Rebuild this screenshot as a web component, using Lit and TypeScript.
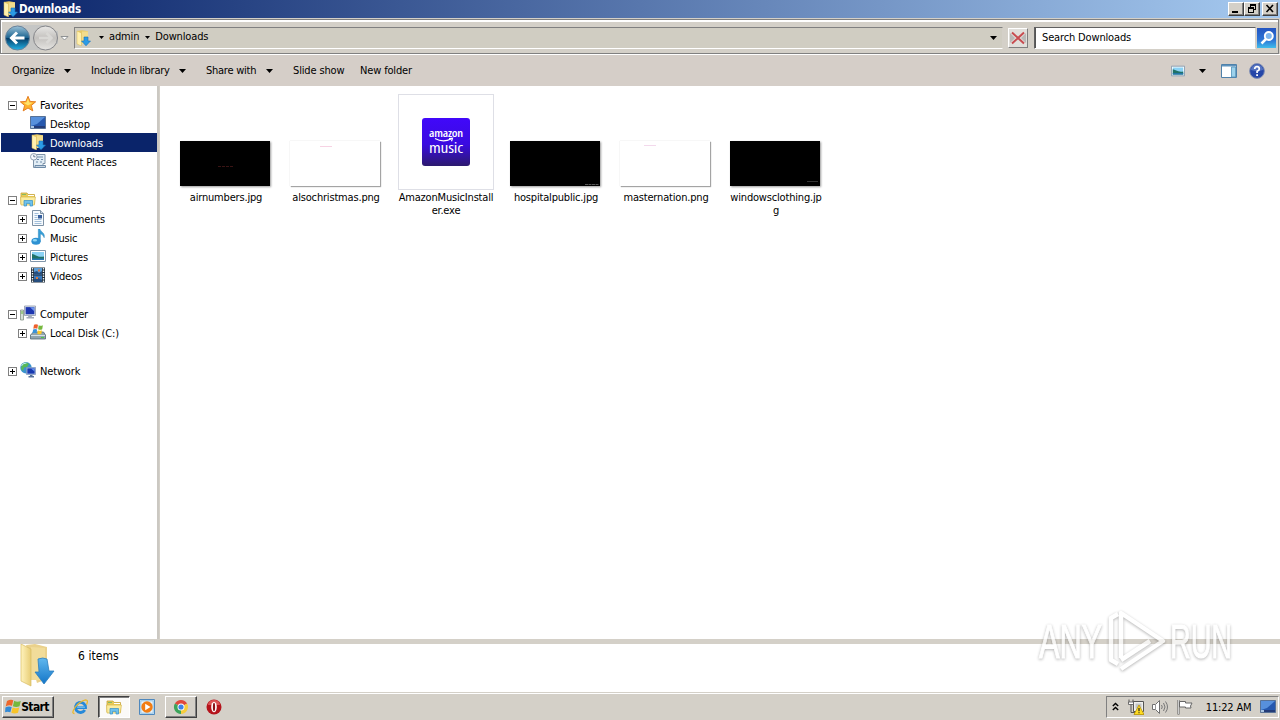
import {LitElement, html, svg, css, nothing} from 'lit';
import type {SVGTemplateResult} from 'lit';
import {customElement, property} from 'lit/decorators.js';
import {classMap} from 'lit/directives/class-map.js';

// 16x16 glyphs, keyed by name
const icons: Record<string, SVGTemplateResult> = {
  download: svg`
    <path d="M2 1l5-.8 6 1V14H7z" fill="#e9c965"/>
    <path d="M7 1.5h6V14H7z" fill="#f3dc8c"/>
    <path d="M2 1l4.500 2v13L2 14z" fill="#fff0ae" stroke="#d9b854" stroke-width=".5"/>
    <path d="M9 7h4v4h2.500L11 15.800 6.500 11H9z" fill="#2b9be6" stroke="#1874bb" stroke-width=".6"/>`,
  star: svg`
    <path d="M8 .3l2.100 5.100 5.600.4-4.300 3.600 1.400 5.500L8 12l-4.800 2.900 1.400-5.500L.3 5.800l5.600-.4z" fill="#fdb12c" stroke="#e2761b" stroke-width=".9"/>
    <path d="M8 2.500l1.300 4 3.500.3L8 9.500 3.500 6.800l3-.3z" fill="#ffe36b"/>`,
  desktop: svg`
    <path d="M.5 1.500h15v12H.5z" fill="#2658ae" stroke="#587296"/>
    <path d="M1 2h14L7 9 1 11z" fill="#5790dc"/>
    <path d="M1 11h14v2H1z" fill="#243c78"/><path d="M1 11h3v2H1z" fill="#a8c4e4"/>`,
  recent: svg`
    <path d="M5 1.500h10v9H13v4H3.500v-9z" fill="#e2edf5" stroke="#7e93a8"/>
    <path d="M7 4h6M7 6.500h2M11 6.500h2M6 9h2M10 9h2M5 12.500h10.500v2H5z" stroke="#6e8ba8" fill="#c7d5e2"/>
    <circle cx="3.800" cy="3.800" r="3.300" fill="#f7fbff" stroke="#91a1b2"/><path d="M3.800 1.800v2h1.700" fill="none" stroke="#4b6078" stroke-width=".8"/>`,
  library: svg`
    <path d="M1 2h6l1 1.500h6.500V13H1z" fill="#eacb57" stroke="#c6a53c" stroke-width=".8"/>
    <path d="M2 3.500h4" stroke="#85bb62"/><path d="M8 4.500h6" stroke="#fff"/>
    <path d="M.6 6h14.800l-1 8H1z" fill="#fbeca0" stroke="#d7b84c" stroke-width=".7"/>
    <path d="M4 15V9.500h8.500V15H10v-2.600H6.500V15z" fill="#6fc1ec" stroke="#348fc6" stroke-width=".7"/>`,
  document: svg`
    <path d="M2.500.5h8l3 3v12h-11z" fill="#f6fafd" stroke="#7d91a5"/>
    <path d="M10.500.5v3h3" fill="#cdd9e5" stroke="#7d91a5"/>
    <path d="M4.500 3.500h4M4.500 5.500h3M4.500 7.500h3M4.500 9.500h7M4.500 11.500h7M4.500 13.500h7" stroke="#8caed0" stroke-width=".8"/><path d="M8 5h4v3.500H8z" fill="#365f9d"/>`,
  music: svg`
    <path d="M8.300 0h1.600c.6 3 5.600 3.800 4.300 8.800C13 6 11.500 5 10.400 5v7.500H8.300z" fill="#389ed6" stroke="#2682b8" stroke-width=".4"/>
    <ellipse cx="6" cy="12.200" rx="4.600" ry="3.500" fill="#2d91d2"/><ellipse cx="4.900" cy="11.200" rx="2.200" ry="1.200" fill="#8ed6f5"/>`,
  picture: svg`
    <path d="M.5 2.500h15v11H.5z" fill="#fff" stroke="#8196aa"/>
    <path d="M2 4h12v8H2z" fill="#8bd2f5"/><path d="M2 6c3 0 6 4 12 2.500V12H2z" fill="#207267"/>
    <path d="M2 10.500h12V12H2z" fill="#2677b5"/>`,
  video: svg`
    <path d="M1 .5h14v15H1z" fill="#1f2c38"/><path d="M4 1h8v6.500H4z" fill="#5b9ed9"/><path d="M4 8.500h8V15H4z" fill="#3979bd"/>
    <path d="M4 5l3-1 2 2 3-2v3.500H4zM4 12l4-1 4 2v2H4z" fill="#264e7e"/><path d="M8 2.500h2v2H8zM6 10h2v2H6z" fill="#d8793e"/>
    <path d="M2.500 1v14M13.500 1v14" stroke="#e9f1f6" stroke-width="1.400" stroke-dasharray="1.500 1"/>`,
  computer: svg`
    <path d="M.5 5h3v10h-3z" fill="#d5dfd7" stroke="#849286" stroke-width=".8"/><path d="M2 6v3" stroke="#62b13e"/>
    <path d="M4.500 1h11v9.500h-11z" fill="#dce3ed" stroke="#8d98aa" stroke-width=".8"/><path d="M5.600 2.100h8.800v7.200H5.600z" fill="#1d36b0"/>
    <path d="M10 2.200h4.200v4z" fill="#6d95ed"/><path d="M8.500 10.500h3l.5 1.500h2v1.500H6.500V12H8z" fill="#a2aaba"/>`,
  disk: svg`
    <path d="M.5 11l3-3h10l2 3v4H.5z" fill="#91a4ae" stroke="#526875" stroke-width=".8"/>
    <path d="M1 11.500h14" stroke="#d4e1e7"/><path d="M11 13.500h3" stroke="#4cca44"/>
    <path d="M4 .8q2-1.200 4 0l-.7 4q-2-1-4 0z" fill="#ee602d"/><path d="M8.700 1.300q2 1 4.200 0l-.7 4q-2 1-4.100 0z" fill="#76b83e"/>
    <path d="M3.100 5.500q2-1 4 0l-.6 3.700q-2-1-4.100 0z" fill="#3793da"/><path d="M7.900 6.200q2 1 4.100 0l-.6 3.600q-2 1-4.100 0z" fill="#fac727"/>`,
  network: svg`
    <circle cx="6" cy="5.800" r="5.700" fill="#3b93cf"/><path d="M2 2q4-3 7 0L7 5 4 5.500 3 9 1 7zM8 6l3 1-3 4z" fill="#58b957"/>
    <path d="M1.500 4q1-3 5-3" stroke="#c2edff" fill="none"/>
    <path d="M6.500 5.500h9v7h-9z" fill="#c9d7ef" stroke="#738bb4" stroke-width=".7"/><path d="M7.300 6.300h7.400v5.400H7.300z" fill="#1739b0"/>
    <path d="M11 6.500h3.500v3z" fill="#6594ef"/><path d="M10 13h2.500v1H14v1.500H8.500V14H10z" fill="#56729b"/>`,
  pane: svg`
    <path d="M.5 1.500h15v13H.5z" fill="#fff" stroke="#4f81aa"/><path d="M1 2h14v1.500H1z" fill="#5e93bd"/>
    <path d="M10.500 4h4v10h-4z" fill="#9dd2ec" stroke="#4f91b9" stroke-width=".8"/>`,
  help: svg`
    <circle cx="8" cy="8" r="7.400" fill="#2546a8" stroke="#8290b4"/><path d="M2 7a6 5.500 0 0 1 12 0q-6 2-12 0z" fill="#5573c0"/>
    <path d="M5.700 6Q5.700 3.700 8 3.700T10.300 6Q10.300 7.200 8.100 8.300V10" fill="none" stroke="#fff" stroke-width="1.700"/><path d="M7.200 11.200h1.800v1.700H7.200z" fill="#fff"/>`,
  flag: svg`
    <path d="M2 2q3.500-2.200 6.300-.8L7 6.700q-3-1.200-6.300.7z" fill="#ee672c"/><path d="M9.200 1.800q3 1.600 6.600.2l-1.300 5.300q-3.600 1.500-6.600-.1z" fill="#75b83d"/>
    <path d="M.4 8.500Q3.500 6.800 6.700 8l-1.300 5.300q-3-1.200-5.300 0z" fill="#338ad6"/><path d="M7.600 8.500q3 1.500 6.600.1L13 13.800q-3.600 1.500-6.700-.1z" fill="#f8c429"/>`,
  ie: svg`
    <path d="M12.800 11A5 5 0 1 1 13.500 8.600H5" fill="none" stroke="#2689d9" stroke-width="2.900"/>
    <path d="M5 8.200h8" stroke="#84cdf6"/><path d="M2.500 14.500Q-1 14.500 3 8.500T13.500.8q3.300 0 1 4.800" fill="none" stroke="#e9b82e" stroke-width="1.300"/>`,
  player: svg`
    <path d="M.5.500h15v15H.5z" fill="#b7dbf4" stroke="#4f88bd"/><path d="M2 2h12v12H2z" fill="#e9f4fb" stroke="#80b0d5" stroke-width=".5"/>
    <circle cx="8" cy="8" r="5.700" fill="#f27d13"/><path d="M6.200 4.800L11.500 8l-5.300 3.200z" fill="#fff"/>`,
  chrome: svg`
    <path d="M8 8L1.900 4.500A7 7 0 0 1 14.100 4.600z" fill="#df483c"/><path d="M8 8l6.100-3.400A7 7 0 0 1 8 15z" fill="#f6cd3d"/>
    <path d="M8 8v7A7 7 0 0 1 1.900 4.500z" fill="#3ca45a"/><circle cx="8" cy="8" r="3.500" fill="#fff"/><circle cx="8" cy="8" r="2.600" fill="#3d82e8"/>`,
  opera: svg`
    <circle cx="8" cy="8" r="7.500" fill="#b5141c"/><path d="M2 6a6 5 0 0 1 12 0z" fill="#dd5355"/>
    <ellipse cx="8" cy="8" rx="2.800" ry="5.300" fill="#fff"/><ellipse cx="8" cy="8" rx="1.100" ry="4.300" fill="#8c1017"/>`,
  plug: svg`
    <path d="M5.500 2.500h10v10h-10z" fill="#f0f0ed" stroke="#555"/><path d="M7.500 4.500h6v5h-6z" fill="#c2c5c7"/>
    <path d="M1 .5v3.500h4V.5M3 4v9.500h4" stroke="#555" fill="none"/><path d="M.5 3h5v2.500h-5z" fill="#fff" stroke="#555" stroke-width=".8"/>
    <path d="M11 6l5 9.500H6z" fill="#ffdc22" stroke="#b59000" stroke-width=".8"/><path d="M11 9v3.300M11 13.300v1" stroke="#222" stroke-width="1.200"/>`,
  speaker: svg`
    <path d="M.5 5.500h3L7.500 1.500v13l-4-4h-3z" fill="#fff" stroke="#707070"/><path d="M3.500 5.500v5" stroke="#999"/>
    <path d="M9.500 6q1.500 2 0 4M11.500 4q3 4 0 8M13.500 2.500q4 5.500 0 11" fill="none" stroke="#777"/>`,
  action: svg`
    <path d="M1.500 1v14.500" stroke="#5b5b5b" stroke-width="2"/><path d="M1.500 1v14" stroke="#fff" stroke-width=".7"/>
    <path d="M2.500 2.500h6v1.500h6.500l-1.500 3 .5 2H8.500V8h-6z" fill="#fff" stroke="#666"/>`,
  search: svg`
    <circle cx="9.800" cy="6" r="4" fill="#7eb5ee" stroke="#fff" stroke-width="1.900"/><path d="M7 9l-4.500 4.500" stroke="#fff" stroke-width="2.500"/>`,
  stop: svg`
    <path d="M0 3l5 5-5 5zM16 3l-5 5 5 5z" fill="#b9b8b6"/>
    <path d="M2 2.500l12 11M14 2.500L2 13.500" stroke="#c84c50" stroke-width="2"/>`,
};

@customElement('shell-icon')
class ShellIcon extends LitElement {
  @property() name = '';
  @property({type: Number}) size = 16;

  static styles = css`
    :host {
      display: block;
      flex: none;
      line-height: 0;
    }
  `;

  render() {
    return html`<svg width=${this.size} height=${this.size} viewBox="0 0 16 16">${icons[this.name]}</svg>`;
  }
}

interface TreeNode {
  label: string;
  icon: string;
  expander?: '+' | '-';
  child?: boolean;
  selected?: boolean;
}

const tree: TreeNode[][] = [
  [
    {label: 'Favorites', icon: 'star', expander: '-'},
    {label: 'Desktop', icon: 'desktop', child: true},
    {label: 'Downloads', icon: 'download', child: true, selected: true},
    {label: 'Recent Places', icon: 'recent', child: true},
  ],
  [
    {label: 'Libraries', icon: 'library', expander: '-'},
    {label: 'Documents', icon: 'document', expander: '+', child: true},
    {label: 'Music', icon: 'music', expander: '+', child: true},
    {label: 'Pictures', icon: 'picture', expander: '+', child: true},
    {label: 'Videos', icon: 'video', expander: '+', child: true},
  ],
  [
    {label: 'Computer', icon: 'computer', expander: '-'},
    {label: 'Local Disk (C:)', icon: 'disk', expander: '+', child: true},
  ],
  [{label: 'Network', icon: 'network', expander: '+'}],
];

@customElement('nav-tree')
class NavTree extends LitElement {
  static styles = css`
    :host {
      display: flex;
      flex-direction: column;
      gap: 19px;
      width: 156px;
      padding: 9px 0 0 1px;
      background: #fff;
      letter-spacing: -0.15px;
    }
    .row {
      display: flex;
      align-items: center;
      height: 19px;
      padding-left: 7px;
      white-space: nowrap;
    }
    .child {
      padding-left: 17px;
    }
    .selected {
      background: #0a246a;
      color: #fff;
    }
    .expander {
      width: 9px;
      height: 9px;
      margin: 2px 3px 0 0;
    }
    shell-icon {
      margin-top: -1px;
    }
    .label {
      margin-left: 4px;
      padding-top: 2px;
    }
  `;

  renderRow(node: TreeNode) {
    return html`
      <div class=${classMap({row: true, child: !!node.child, selected: !!node.selected})}>
        <svg class="expander" viewBox="0 0 9 9" shape-rendering="crispEdges">
          ${node.expander
            ? svg`<path d="M.5.500h8v8h-8z" fill="#fff" stroke="#808080"/><path d=${node.expander === '+' ? 'M2 4.500h5M4.500 2v5' : 'M2 4.500h5'} stroke="#000"/>`
            : nothing}
        </svg>
        <shell-icon name=${node.icon}></shell-icon>
        <span class="label">${node.label}</span>
      </div>
    `;
  }

  render() {
    return tree.map((group) => html`<div>${group.map((node) => this.renderRow(node))}</div>`);
  }
}

interface FileEntry {
  lines: string[];
  kind: 'dark' | 'light' | 'app';
  mark?: SVGTemplateResult;
}

const files: FileEntry[] = [
  {lines: ['airnumbers.jpg'], kind: 'dark', mark: svg`<path d="M38 25.500h16" stroke="#3a1414" stroke-dasharray="3 1"/>`},
  {lines: ['alsochristmas.png'], kind: 'light', mark: svg`<path d="M30 5.500h12" stroke="#f7d3e4"/>`},
  {lines: ['AmazonMusicInstall', 'er.exe'], kind: 'app'},
  {lines: ['hospitalpublic.jpg'], kind: 'dark', mark: svg`<path d="M75 43.500h14" stroke="#555" stroke-dasharray="3 .5"/>`},
  {lines: ['masternation.png'], kind: 'light', mark: svg`<path d="M24 4.500h12" stroke="#f3d9ec"/>`},
  {lines: ['windowsclothing.jp', 'g'], kind: 'dark', mark: svg`<path d="M77 40.500h11" stroke="#333"/>`},
];

@customElement('file-grid')
class FileGrid extends LitElement {
  static styles = css`
    :host {
      display: grid;
      grid-template-columns: repeat(auto-fill, 110px);
      align-content: start;
      flex: 1;
      padding: 8px 0 0 11px;
      background: #fff;
      letter-spacing: -0.18px;
    }
    .file {
      display: flex;
      flex-direction: column;
      align-items: center;
    }
    .frame {
      display: flex;
      align-items: flex-end;
      box-sizing: border-box;
      width: 96px;
      height: 96px;
      padding: 0 0 4px 2px;
    }
    .frame.app {
      align-items: center;
      justify-content: center;
      padding: 0;
      border: 1px solid #dedfe6;
    }
    .thumb {
      width: 90px;
      height: 45px;
      box-shadow: 1px 1px 2px #0006;
    }
    .dark {
      background: #000;
    }
    .light {
      background: #fff;
      box-shadow: 1px 1px 1px #0005, 0 0 1px #0003;
    }
    .caption {
      padding-top: 1px;
      line-height: 13px;
      text-align: center;
      white-space: nowrap;
    }
  `;

  renderApp() {
    return html`
      <svg width="48" height="48" viewBox="0 0 48 48" font-family="'Open Sans', sans-serif" fill="#fff">
        <defs>
          <linearGradient id="tile" x2="0" y2="1">
            <stop offset="0" stop-color="#4108fa"/>
            <stop offset=".55" stop-color="#3a0be0"/>
            <stop offset="1" stop-color="#2c1a6e"/>
          </linearGradient>
        </defs>
        <rect width="48" height="48" rx="3" fill="url(#tile)"/>
        <text x="7" y="19" font-size="11" font-weight="600" textLength="34" lengthAdjust="spacingAndGlyphs">amazon</text>
        <path d="M13 20.500q8 4.500 16 .5M27 20.500l3.500-.3-1 3" fill="none" stroke="#fff" stroke-width="1.200"/>
        <text x="7" y="35" font-size="14" textLength="34" lengthAdjust="spacingAndGlyphs">music</text>
      </svg>
    `;
  }

  render() {
    return files.map(
      (file) => html`
        <div class="file">
          <div class=${classMap({frame: true, app: file.kind === 'app'})}>
            ${file.kind === 'app'
              ? this.renderApp()
              : html`<svg class="thumb ${file.kind}" viewBox="0 0 90 45">${file.mark}</svg>`}
          </div>
          <div class="caption">${file.lines.map((line) => html`<div>${line}</div>`)}</div>
        </div>
      `
    );
  }
}

const arrow = (cls = '') => html`<svg class="arrow ${cls}" width="7" height="4" viewBox="0 0 7 4"><path d="M0 0h7L3.500 4z"/></svg>`;
const smallArrow = (cls = '') => html`<svg class="arrow ${cls}" width="5" height="3" viewBox="0 0 5 3"><path d="M0 0h5L2.500 3z"/></svg>`;

@customElement('app-root')
class AppRoot extends LitElement {
  static styles = css`
    :host {
      display: flex;
      flex-direction: column;
      position: relative;
      width: 1280px;
      height: 720px;
      overflow: hidden;
      background: #d4d0c8;
      color: #000;
      font: 11px 'DejaVu Sans Condensed', 'DejaVu Sans', sans-serif;
      font-stretch: condensed;
      letter-spacing: -0.25px;
      white-space: nowrap;
    }
    .arrow {
      flex: none;
    }
    .titlebar {
      display: flex;
      align-items: center;
      box-sizing: border-box;
      height: 18px;
      padding: 0 2px 0 2px;
      background: linear-gradient(90deg, #0a246a, #a6caf0);
      color: #fff;
      font-weight: 700;
    }
    .title {
      flex: 1;
      margin-left: 1px;
      font-size: 11.500px;
      letter-spacing: -0.2px;
    }
    .winbtn {
      box-sizing: border-box;
      width: 16px;
      height: 14px;
      background: #d4d0c8;
      border: 1px solid;
      border-color: #fff #404040 #404040 #fff;
      box-shadow: inset -1px -1px #808080;
    }
    .winbtn.close {
      margin-left: 2px;
    }
    .winbtn svg {
      display: block;
    }
    .navbar {
      display: flex;
      align-items: center;
      box-sizing: border-box;
      height: 36px;
      margin-right: 1px;
      border: 1px solid #808080;
      border-color: #808080;
      box-shadow: inset 1px 1px #fff, inset 0 2px #fff;
      padding: 2px 0 0 3px;
      margin-top: 1px;
      height: 35px;
    }
    .travel {
      flex: none;
      width: 66px;
      height: 28px;
    }
    .address {
      display: flex;
      align-items: center;
      box-sizing: border-box;
      width: 929px;
      height: 22px;
      margin-left: 4px;
      padding-left: 0;
      border: 1px solid;
      border-color: #808080 #d4d0c8 #fff #808080;
      background: #d0cdc2;
    }
    .address .first {
      margin-left: 8px;
    }
    .address .crumb {
      margin: -2px 6px 0 5px;
      letter-spacing: -0.15px;
    }
    .address .drop {
      margin-left: auto;
      margin-right: 5px;
    }
    .stop {
      display: grid;
      place-items: center;
      box-sizing: border-box;
      width: 20px;
      height: 20px;
      margin-left: 5px;
      border: 1px solid;
      border-color: #fff #808080 #808080 #fff;
      background: #e1dfdb;
    }
    .search {
      display: flex;
      align-items: center;
      box-sizing: border-box;
      width: 222px;
      height: 22px;
      margin-left: 6px;
      padding-left: 7px;
      border: 1px solid;
      border-color: #606060 #d4d0c8 #fff #606060;
      box-shadow: inset 1px 0 #555;
      background: #fff;
      letter-spacing: -0.15px;
    }
    .go {
      display: grid;
      place-items: center;
      width: 19px;
      height: 20px;
      margin-left: 1px;
      background: linear-gradient(#2455c0, #2c74d6 60%, #41bdea);
    }
    .toolbar {
      display: flex;
      align-items: center;
      box-sizing: border-box;
      height: 32px;
      padding: 0 15px 0 12px;
      border-top: 1px solid #fff;
      background: #d5cec8;
    }
    .command {
      display: flex;
      align-items: center;
      gap: 8px;
      margin-right: 20px;
    }
    .command.plain {
      margin-right: 16px;
      letter-spacing: -0.15px;
    }
    .views {
      display: flex;
      align-items: center;
      margin-left: auto;
    }
    .views .arrow {
      margin: 0 15px 0 14px;
    }
    .views .help {
      margin-left: 12px;
    }
    .content {
      display: flex;
      height: 553px;
    }
    .splitter {
      width: 2px;
      border-right: 1px solid #d4d0c8;
      background: #cbc8c2;
    }
    .details {
      display: flex;
      box-sizing: border-box;
      height: 53px;
      padding-left: 17px;
      border-top: 5px solid #d4d0c8;
      background: #fff;
    }
    .count {
      margin: 4px 0 0 17px;
      font-size: 12px;
      line-height: 16px;
      letter-spacing: 0.05px;
    }
    .taskbar {
      display: flex;
      align-items: center;
      box-sizing: border-box;
      height: 28px;
      padding: 1px 1px 0 2px;
      border-top: 1px solid #d4d0c8;
      box-shadow: inset 0 1px #fff;
    }
    .task {
      display: flex;
      align-items: center;
      justify-content: center;
      box-sizing: border-box;
      width: 32px;
      height: 22px;
    }
    .raised {
      border: 1px solid;
      border-color: #fff #404040 #404040 #fff;
      box-shadow: inset -1px -1px #808080;
    }
    .pressed {
      border: 1px solid;
      border-color: #404040 #fff #fff #404040;
      box-shadow: inset 1px 1px #808080;
      background: #fbfaf8;
    }
    .start {
      width: 52px;
      padding-right: 2px;
      font-weight: 700;
      font-size: 12px;
      letter-spacing: -0.6px;
    }
    .quick {
      display: flex;
      align-items: center;
      gap: 1.600px;
      margin-left: 10px;
    }
    .tray {
      display: flex;
      align-items: center;
      box-sizing: border-box;
      width: 173px;
      height: 22px;
      margin-left: auto;
      padding: 0 2px 0 5px;
      gap: 8.500px;
      border: 1px solid;
      border-color: #808080 #fff #fff #808080;
    }
    .clock {
      margin-left: auto;
      letter-spacing: -0.15px;
    }
    .watermark {
      position: absolute;
      left: 1030px;
      top: 604px;
      overflow: visible;
      filter: drop-shadow(0 1px 1.500px #0006);
      opacity: 0.75;
    }
  `;

  renderTravel() {
    return html`
      <svg class="travel" viewBox="0 0 66 28">
        <defs>
          <linearGradient id="back" x2="0" y2="1">
            <stop offset="0" stop-color="#9cc2d8"/>
            <stop offset=".48" stop-color="#1e6692"/>
            <stop offset=".52" stop-color="#053e69"/>
            <stop offset="1" stop-color="#22b2e6"/>
          </linearGradient>
          <linearGradient id="fwd" x2="0" y2="1">
            <stop offset="0" stop-color="#e9e8e6"/>
            <stop offset=".5" stop-color="#c3c1be"/>
            <stop offset="1" stop-color="#e6e5e2"/>
          </linearGradient>
        </defs>
        <path d="M13 1h29q5 1 8 6h4v13H50q-4 6-10 6H13z" fill="#c5c6c5"/>
        <circle cx="13.500" cy="14" r="12" fill="url(#back)" stroke="#68829a"/>
        <path d="M20.500 14H8M13 8.500L7.500 14l5.500 5.500" fill="none" stroke="#fff" stroke-width="3"/>
        <circle cx="41.500" cy="14" r="12" fill="url(#fwd)" stroke="#85868a"/>
        <path d="M35 14h12M42.500 9l5 5-5 5" fill="none" stroke="#d9d8d5" stroke-width="2.500"/>
        <path d="M57 12.500h7L60.500 16z" fill="#fff" stroke="#85888a" stroke-width=".9"/>
      </svg>
    `;
  }

  renderFolder() {
    return html`
      <svg width="44" height="48" viewBox="0 0 44 48">
        <defs>
          <linearGradient id="flap">
            <stop offset="0" stop-color="#fff3bd"/>
            <stop offset="1" stop-color="#e8cd76"/>
          </linearGradient>
          <linearGradient id="down" x2="0" y2="1">
            <stop offset="0" stop-color="#61b8ee"/>
            <stop offset="1" stop-color="#1375c8"/>
          </linearGradient>
        </defs>
        <path d="M9 1l9-1 12 3v32l-10 4z" fill="#ead18c"/>
        <path d="M14 3l14 1v32H14z" fill="#f1dc9a"/>
        <path d="M4 0l10 5v37L4 37z" fill="url(#flap)" stroke="#d8bc62" stroke-width=".7"/>
        <path d="M21 15q5-2 9 0l2 12h5L27 40 18 28h4z" fill="url(#down)" stroke="#2c7fbe" stroke-width=".8"/>
      </svg>
    `;
  }

  renderWatermark() {
    return html`
      <svg class="watermark" width="210" height="76" viewBox="0 0 210 76" font-family="'Liberation Sans', sans-serif" font-size="48" fill="#fff">
        <text x="9" y="54" textLength="63" lengthAdjust="spacingAndGlyphs" stroke="#fff">ANY</text>
        <g fill="none" stroke="#fff" stroke-width="4.500" stroke-linejoin="round">
          <path d="M88 10l-7 4v42l7 4"/>
          <path d="M91 54V9l42 28-42 28"/>
          <path d="M91 56l29-19"/>
        </g>
        <text x="140" y="54" textLength="62" lengthAdjust="spacingAndGlyphs" stroke="#fff">RUN</text>
      </svg>
    `;
  }

  render() {
    return html`
      <div class="titlebar">
        <shell-icon name="download"></shell-icon>
        <span class="title">Downloads</span>
        <div class="winbtn"><svg width="14" height="12"><path d="M3 8h6v2H3z"/></svg></div>
        <div class="winbtn">
          <svg width="14" height="12" shape-rendering="crispEdges">
            <path d="M5 1h6v2H5zM5 3h1v1H5zM10 3h1v4H9V6h1zM3 4h6v2H3zM3 6h1v4H3zM8 6h1v4H8zM4 9h4v1H4z"/>
          </svg>
        </div>
        <div class="winbtn close"><svg width="14" height="12"><path d="M3.500 2l6.500 7M10 2L3.500 9" stroke="#000" stroke-width="1.600"/></svg></div>
      </div>
      <div class="navbar">
        ${this.renderTravel()}
        <div class="address">
          <shell-icon name="download"></shell-icon>
          ${smallArrow('first')}<span class="crumb">admin</span>${smallArrow()}<span class="crumb">Downloads</span>${arrow('drop')}
        </div>
        <div class="stop"><shell-icon name="stop"></shell-icon></div>
        <div class="search">Search Downloads</div>
        <div class="go"><shell-icon name="search"></shell-icon></div>
      </div>
      <div class="toolbar">
        <div class="command"><span style="width:44px">Organize</span>${arrow()}</div>
        <div class="command"><span style="width:80px">Include in library</span>${arrow()}</div>
        <div class="command"><span style="width:52px">Share with</span>${arrow()}</div>
        <div class="command plain"><span style="width:51px">Slide show</span></div>
        <div class="command plain"><span>New folder</span></div>
        <div class="views">
          <shell-icon name="picture" size="14"></shell-icon>
          ${arrow()}
          <shell-icon name="pane"></shell-icon>
          <shell-icon class="help" name="help"></shell-icon>
        </div>
      </div>
      <div class="content">
        <nav-tree></nav-tree>
        <div class="splitter"></div>
        <file-grid></file-grid>
      </div>
      <div class="details">
        ${this.renderFolder()}
        <span class="count">6 items</span>
      </div>
      <div class="taskbar">
        <div class="task raised start"><shell-icon name="flag"></shell-icon>Start</div>
        <div class="quick">
          <div class="task"><shell-icon name="ie"></shell-icon></div>
          <div class="task pressed"><shell-icon name="library"></shell-icon></div>
          <div class="task"><shell-icon name="player"></shell-icon></div>
          <div class="task raised"><shell-icon name="chrome"></shell-icon></div>
          <div class="task"><shell-icon name="opera"></shell-icon></div>
        </div>
        <div class="tray">
          <svg width="7" height="10" viewBox="0 0 7 10"><path d="M.8 4l2.700-2.500L6.200 4M.8 8l2.700-2.500L6.200 8" fill="none" stroke="#000" stroke-width="1.400"/></svg>
          <shell-icon name="plug"></shell-icon>
          <shell-icon name="speaker"></shell-icon>
          <shell-icon name="action"></shell-icon>
          <span class="clock">11:22 AM</span>
          <shell-icon name="desktop"></shell-icon>
        </div>
      </div>
      ${this.renderWatermark()}
    `;
  }
}
